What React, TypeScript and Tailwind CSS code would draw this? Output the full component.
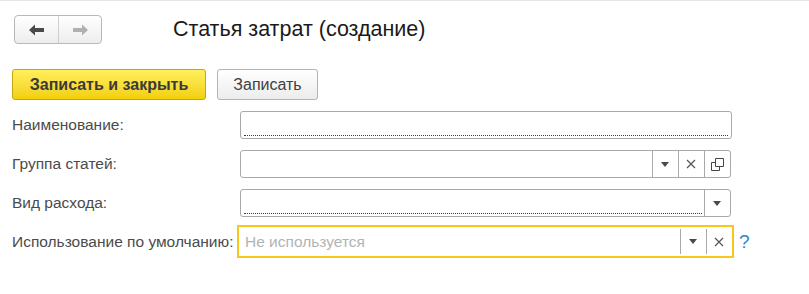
import React from 'react';

const font = { fontFamily: '"Liberation Sans", Arial, sans-serif' };

function ArrowLeft({ color }: { color: string }) {
  return (
    <svg width="16" height="12" viewBox="0 0 16 12">
      <path d="M0 6 L6 0.5 L6 4 L15 4 L15 8 L6 8 L6 11.5 Z" fill={color} />
    </svg>
  );
}

function ArrowRight({ color }: { color: string }) {
  return (
    <svg width="16" height="12" viewBox="0 0 16 12">
      <path d="M16 6 L10 0.5 L10 4 L1 4 L1 8 L10 8 L10 11.5 Z" fill={color} />
    </svg>
  );
}

function Caret() {
  return (
    <svg width="8" height="5" viewBox="0 0 8 5">
      <path d="M0 0 L8 0 L4 5 Z" fill="#4a4a4a" />
    </svg>
  );
}

function Cross() {
  return (
    <svg width="10" height="10" viewBox="0 0 10 10">
      <path d="M1 1 L9 9 M9 1 L1 9" stroke="#555" strokeWidth="1.2" />
    </svg>
  );
}

function OpenIcon() {
  return (
    <svg width="13" height="13" viewBox="0 0 13 13">
      <path d="M4.5 0.5 H12.5 V8.5 H4.5 Z" fill="none" stroke="#444" strokeWidth="1" />
      <path d="M4.5 4.5 H0.5 V12.5 H8.5 V8.5" fill="none" stroke="#444" strokeWidth="1" />
    </svg>
  );
}

function FieldButton({ children, full = true }: { children: React.ReactNode; full?: boolean }) {
  return (
    <div className="w-[26px] h-full flex items-center justify-center relative">
      <span
        className={
          full
            ? 'absolute left-0 top-0 bottom-0 w-px bg-[#a9a9a9]'
            : 'absolute left-0 top-[2px] bottom-[2px] w-px bg-[#a9a9a9]'
        }
      />
      {children}
    </div>
  );
}

function Label({ text }: { text: string }) {
  return <div className="w-[228px] text-[15.5px] text-[#4b4b4b] leading-none">{text}</div>;
}

export default function App() {
  return (
    <div className="w-[809px] h-[294px] bg-white border-t border-[#e6e6e6] overflow-hidden" style={font}>
      <div className="flex items-center pl-[14px] pt-[14px]">
        <div className="flex h-[29px] w-[88px] rounded-[4px] border border-[#b8b8b8] bg-gradient-to-b from-white to-[#ededed]">
          <div className="w-[44px] flex items-center justify-center border-r border-[#cfcfcf]">
            <ArrowLeft color="#4a4a4a" />
          </div>
          <div className="flex-1 flex items-center justify-center">
            <ArrowRight color="#b0b0b0" />
          </div>
        </div>
        <div className="ml-[71px] text-[21.5px] text-[#1a1a1a] leading-none">Статья затрат (создание)</div>
      </div>

      <div className="flex items-center gap-[11px] pl-[12px] mt-[25px]">
        <button className="h-[31px] w-[194px] rounded-[3px] border border-[#c7a70e] bg-gradient-to-b from-[#fff05a] to-[#f3cf00] text-[16px] font-bold text-[#3a3a3a]">
          Записать и закрыть
        </button>
        <button className="h-[31px] w-[101px] rounded-[3px] border border-[#b3b3b3] bg-gradient-to-b from-white to-[#ececec] text-[16px] text-[#404040]">
          Записать
        </button>
      </div>

      <div className="flex flex-col pl-[12px] mt-[11px]">
        <div className="flex items-center h-[28px]">
          <Label text="Наименование:" />
          <div className="relative h-[28px] w-[492px] rounded-[3px] border border-[#a9a9a9] bg-white">
            <span className="absolute left-[3px] right-[3px] bottom-[2px] border-b border-dotted border-[#d40000]" />
          </div>
        </div>

        <div className="flex items-center h-[28px] mt-[11px]">
          <Label text="Группа статей:" />
          <div className="flex h-[28px] w-[491px] rounded-[3px] border border-[#a9a9a9] bg-white">
            <div className="flex-1" />
            <FieldButton>
              <Caret />
            </FieldButton>
            <FieldButton>
              <Cross />
            </FieldButton>
            <FieldButton>
              <OpenIcon />
            </FieldButton>
          </div>
        </div>

        <div className="flex items-center h-[28px] mt-[11px]">
          <Label text="Вид расхода:" />
          <div className="flex h-[28px] w-[491px] rounded-[3px] border border-[#a9a9a9] bg-white">
            <div className="flex-1 relative">
              <span className="absolute left-[3px] right-[2px] bottom-[2px] border-b border-dotted border-[#d40000]" />
            </div>
            <FieldButton>
              <Caret />
            </FieldButton>
          </div>
        </div>

        <div className="flex items-center h-[33px] mt-[8px]">
          <Label text="Использование по умолчанию:" />
          <div className="flex items-stretch -ml-[3px] h-[33px] w-[497px] border-2 border-[#f7c81a] bg-white">
            <div className="flex-1 flex items-center pl-[6px] text-[15.5px] text-[#b3b3b3]">Не используется</div>
            <FieldButton full={false}>
              <Caret />
            </FieldButton>
            <FieldButton full={false}>
              <Cross />
            </FieldButton>
          </div>
          <span className="ml-[5px] text-[19px] text-[#2b86d1] leading-none">?</span>
        </div>
      </div>
    </div>
  );
}
